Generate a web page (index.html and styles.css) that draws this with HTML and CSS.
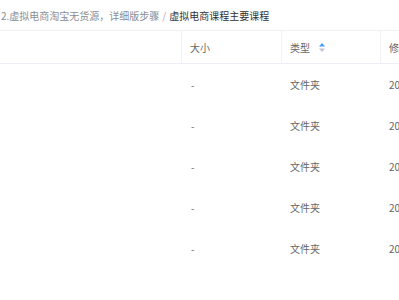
FILE: index.html
```html
<!DOCTYPE html>
<html lang="zh">
<head>
<meta charset="utf-8">
<link rel="stylesheet" href="styles.css">
</head>
<body>
<div class="crumbs"><span class="crumb">2.虚拟电商淘宝无货源，详细版步骤</span><span class="sep">/</span><span class="crumb current">虚拟电商课程主要课程</span></div>
<div class="table">
  <div class="row head">
    <div class="cell name"></div>
    <div class="cell">大小</div>
    <div class="cell">类型<span class="sort"><svg width="6" height="9" viewBox="0 0 6 9"><path d="M3 0 L6 3.5 L0 3.5 Z" fill="#409eff"/><path d="M3 9 L6 5.5 L0 5.5 Z" fill="#c0c4cc"/></svg></span></div>
    <div class="cell">修</div>
  </div>
  <div class="row"><div class="cell name"></div><div class="cell">-</div><div class="cell">文件夹</div><div class="cell">20</div></div>
  <div class="row"><div class="cell name"></div><div class="cell">-</div><div class="cell">文件夹</div><div class="cell">20</div></div>
  <div class="row"><div class="cell name"></div><div class="cell">-</div><div class="cell">文件夹</div><div class="cell">20</div></div>
  <div class="row"><div class="cell name"></div><div class="cell">-</div><div class="cell">文件夹</div><div class="cell">20</div></div>
  <div class="row"><div class="cell name"></div><div class="cell">-</div><div class="cell">文件夹</div><div class="cell">20</div></div>
</div>
</body>
</html>
```
FILE: styles.css
```css
html, body {
  margin: 0;
  padding: 0;
  background: #fff;
  overflow: hidden;
}
body {
  width: 399px;
  height: 300px;
  font-family: "Noto Sans CJK SC", "Noto Sans", sans-serif;
  font-size: 10px;
  color: #606266;
}
.crumbs {
  height: 30px;
  display: flex;
  align-items: center;
  padding-left: 1px;
  white-space: nowrap;
  overflow: hidden;
}
.crumb { color: #8a8d94; }
.crumb.current { color: #303133; }
.sep { color: #a8abb2; margin: 0 3px; }
.table {
  border-top: 1px solid #f0f0f0;
  width: 399px;
  overflow: hidden;
}
.row {
  display: grid;
  grid-template-columns: 182px 100px 99px 1fr;
  height: 41px;
  align-items: center;
}
.row.head {
  height: 32px;
  border-bottom: 1px solid #ebeef5;
  align-items: stretch;
}
.row.head .cell {
  display: flex;
  align-items: center;
  color: #666;
}
.row.head .cell:not(:last-child) {
  border-right: 1px solid #f2f2f2;
}
.cell {
  padding-left: 8px;
  white-space: nowrap;
  overflow: hidden;
  color: #666;
}
.row:not(.head) .cell:nth-child(2) { padding-left: 9px; }
.sort {
  display: inline-flex;
  margin-left: 9px;
}
```
